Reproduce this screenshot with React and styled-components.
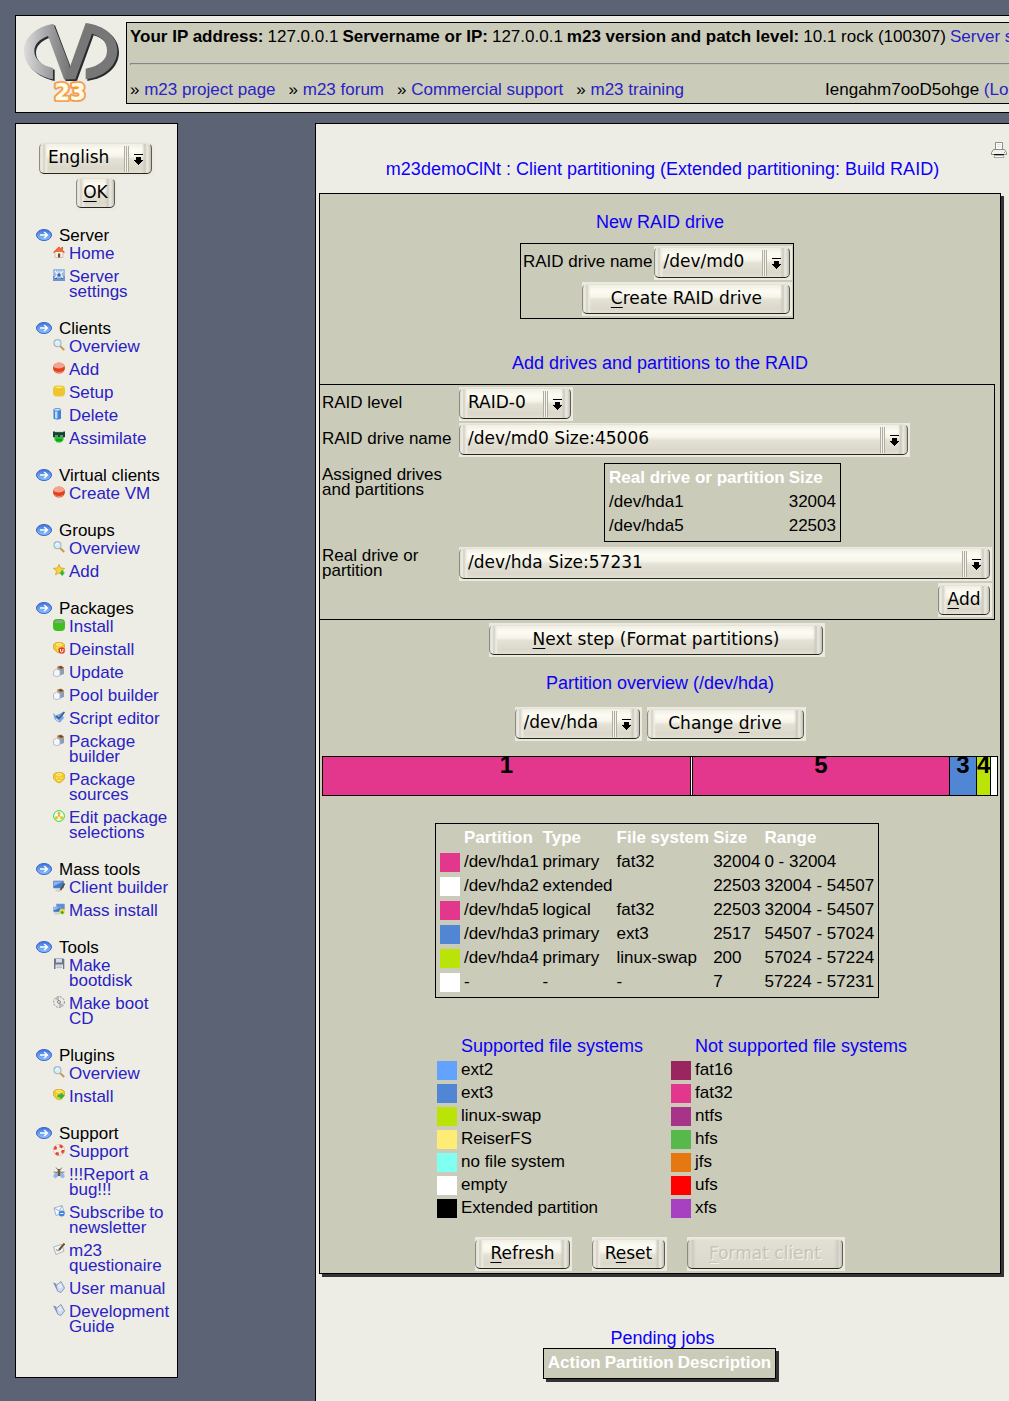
import React, { useId } from 'react';
import styled, { createGlobalStyle } from 'styled-components';

const ink = '#000';
const panel = '#eeede5';
const card = '#cbcbb9';
const link = '#2a22c4';

const GlobalStyle = createGlobalStyle`
  * { box-sizing: border-box; }
  body {
    margin: 0;
    background: #5b6374;
    color: ${ink};
    font-family: "Liberation Sans", Arial, sans-serif;
    font-size: 17px;
    line-height: 15px;
  }
  h1, h2, h3, p, ul, hr { margin: 0; padding: 0; }
  ul { list-style: none; }
`;

/* ---------- page frame ---------- */

const Page = styled.div`
  min-height: 100vh;
  padding: 15px 0 0 15px;
  display: flex;
  flex-direction: column;
  gap: 10px;
  overflow: hidden;
`;

const Header = styled.header`
  display: flex;
  align-items: flex-start;
  gap: 6px;
  padding: 6px 0 8px 7px;
  background: ${panel};
  border: 1px solid ${ink};
  border-right: 0;
`;

const LogoLink = styled.a`
  display: block;
  flex: none;
  svg { display: block; }
`;

const InfoBox = styled.div`
  flex: 1;
  min-width: 0;
  padding: 4px 0 4px 3px;
  background: ${card};
  border: 1px solid ${ink};
  border-right: 0;
  line-height: 19px;
  white-space: nowrap;
  overflow: hidden;
`;

const Facts = styled.p`
  display: flex;
  gap: 4px;
`;

const Rule = styled.hr`
  height: 2px;
  margin: 17px 0 15px;
  border: 0;
  border-top: 1px solid #85858c;
  border-left: 1px solid #85858c;
  background: #c2c2b8;
`;

const TopRow = styled.div`
  display: flex;
  gap: 141px;
`;

const TopNav = styled.nav`
  display: flex;
  gap: 13px;
`;

const A = styled.a`
  color: ${link};
  text-decoration: none;
`;

const Columns = styled.div`
  flex: 1;
  display: grid;
  grid-template-columns: 163px minmax(0, 1fr);
  gap: 137px;
`;

/* ---------- sidebar ---------- */

const Sidebar = styled.aside`
  align-self: start;
  padding: 18px 7px 43px 20px;
  background: ${panel};
  border: 1px solid ${ink};
`;

const LanguageForm = styled.form`
  display: flex;
  flex-direction: column;
  align-items: center;
  margin: 0 13px 18px 0;
`;

const Menu = styled.nav`
  display: flex;
  flex-direction: column;
  gap: 22px;
`;

const MenuTitle = styled.h3`
  display: flex;
  gap: 7px;
  margin-bottom: 3px;
  font-size: 17px;
  font-weight: normal;
  svg { flex: none; margin-top: 1px; }
`;

const MenuList = styled.ul`
  display: flex;
  flex-direction: column;
  gap: 8px;
  padding-left: 17px;
`;

const MenuItem = styled.li`
  display: flex;
  gap: 4px;
  svg { flex: none; }
`;

/* ---------- controls ---------- */

const Shell = styled.span`
  position: relative;
  display: block;
  flex: none;
  width: ${(p) => p.$width}px;
  height: 34px;
  padding: ${(p) => (p.$select ? '1px 2px 2px 0' : '2px 2px 2px 0')};
  background: #ece9de;
`;

const face = `
  display: block;
  width: 100%;
  height: 100%;
  margin: 0;
  border: 1px solid #8d8a82;
  border-top-color: #e4e1d6;
  border-bottom-color: #26251f;
  border-right-color: #5e5c56;
  border-radius: 5px;
  background:
    linear-gradient(90deg, #dedbd1 0, #efede4 2px, #d2cfc5 4px, #efede3 6px, transparent 8px),
    linear-gradient(270deg, #bfbcb2 0, #dcd9cf 2px, #eceae0 4px, #cbc8be 6px, transparent 9px),
    linear-gradient(180deg, #f1efe4 0, #fdfcf3 22%, #f6f4ea 42%, #e4e1d5 52%, #dbd8cb 85%, #e2dfd3 100%);
  color: ${ink};
  font: 17px "DejaVu Sans", sans-serif;
  line-height: 20px;
`;

const Face = styled.button`
  ${face}
  padding: 0 0 3px;
  text-align: center;
  white-space: nowrap;
  u { text-underline-offset: 3px; text-decoration-thickness: 1px; }
  &:disabled {
    color: #c6c3b8;
    text-shadow: 1px 1px 0 #f6f4ec;
    background:
      linear-gradient(90deg, #c9c6bc 0, #e0ddd3 3px, #cbc8be 4px, transparent 8px),
      linear-gradient(270deg, #c5c2b8 0, #e0ddd3 3px, #cbc8be 4px, transparent 8px),
      linear-gradient(180deg, #e2dfd4, #dad7cb);
  }
`;

const NativeSelect = styled.select`
  ${face}
  appearance: none;
  padding: 0 32px 3px 8px;
`;

const Ridge = styled.svg`
  position: absolute;
  top: 4px;
  right: 9px;
  pointer-events: none;
`;

function Button({ width, hot, children, ...rest }) {
  const at = children.indexOf(hot);
  return (
    <Shell $width={width}>
      <Face type="button" {...rest}>
        {children.slice(0, at)}<u>{hot}</u>{children.slice(at + 1)}
      </Face>
    </Shell>
  );
}

function Select({ width, id, value, label }) {
  return (
    <Shell $width={width} $select>
      <NativeSelect id={id} aria-label={label} defaultValue={value}>
        <option>{value}</option>
      </NativeSelect>
      <Ridge width="21" height="26" viewBox="0 0 21 26" shapeRendering="crispEdges">
        <path d="M0.500 0v26M2.500 0v26M4.500 0v26" stroke="#b0ada2" />
        <path d="M1.500 0v26M3.500 0v26" stroke="#f6f4ea" />
        <path d="M10 8h9v1h-9zM12 11h5v3h2v1h-1v1h-1v1h-1v1h-1v1h-1v-1h-1v-1h-1v-1h-1v-1h-1v-1h2z" fill="#000" />
      </Ridge>
    </Shell>
  );
}

/* ---------- main column ---------- */

const Main = styled.main`
  background: ${panel};
  border: 1px solid ${ink};
  border-right: 0;
  border-bottom: 0;
  padding: 18px 0 20px;
`;

const PrintRow = styled.div`
  display: flex;
  justify-content: flex-end;
  padding: 0 2px 1px;
  a, svg { display: block; }
`;

const Title = styled.h2`
  color: #0d00f8;
  font-size: 18px;
  font-weight: normal;
  line-height: 20px;
  text-align: ${(p) => (p.$left ? 'left' : 'center')};
  white-space: nowrap;
`;

const Card = styled.section`
  margin: 14px 8px 54px 3px;
  padding: 18px 0 2px;
  background: ${card};
  border: 1px solid ${ink};
  box-shadow: 3px 3px 0 #333;
`;

const Centered = styled.div`
  display: flex;
  justify-content: center;
  align-items: center;
  gap: ${(p) => p.$gap || 0}px;
  margin-top: ${(p) => p.$top || 0}px;
  margin-right: ${(p) => (p.$inner ? 6 : 0)}px;
`;

const NewRaid = styled.form`
  display: grid;
  justify-items: end;
  gap: 2px;
  width: 274px;
  margin: 11px 0 34px;
  padding: 2px;
  border: 1px solid ${ink};
`;

const FieldRow = styled.div`
  display: flex;
  align-items: flex-start;
  gap: 2px;
  white-space: nowrap;
`;

const RaidForm = styled.form`
  display: grid;
  grid-template-columns: 135px minmax(0, 1fr);
  gap: 2px;
  margin: 11px 5px 3px 0;
  padding: 2px;
  border: 1px solid ${ink};
  border-left: 0;
`;

const FieldName = styled.label`
  padding-top: ${(p) => (p.$tall ? 1 : 8)}px;
`;

const FieldTitle = styled.span`
  padding-top: 8px;
`;

const TableCell = styled.div`
  display: flex;
  justify-content: center;
  padding: 4px 8px 3px 2px;
`;

const ButtonCell = styled.div`
  grid-column: 2;
  justify-self: end;
`;

const DataTable = styled.table`
  border: 1px solid ${ink};
  border-spacing: 4px 5px;
  border-collapse: separate;
  background: ${card};
  box-shadow: ${(p) => (p.$shadow ? '3px 3px 0 #333' : 'none')};
  th, td {
    height: 19px;
    padding: 0;
    line-height: 18px;
    text-align: left;
    vertical-align: top;
    white-space: nowrap;
  }
  th { color: #fff; }
`;

const Swatch = styled.span`
  display: block;
  flex: none;
  width: 20px;
  height: 19px;
  background: ${(p) => p.$color};
`;

const DiskBar = styled.div`
  display: flex;
  height: 40px;
  margin: 15px 2px 27px;
  border: 1px solid ${ink};
`;

const Slice = styled.div`
  flex: ${(p) => p.$size} 1 0;
  min-width: 0;
  background: ${(p) => p.$color};
  font-size: 24px;
  font-weight: bold;
  line-height: 16px;
  text-align: center;
  & + & { border-left: 1px solid ${ink}; box-sizing: content-box; }
`;

const Legend = styled.div`
  display: grid;
  grid-template-columns: 234px minmax(0, 1fr);
  width: 440px;
  margin: 38px 0 19px;
`;

const LegendTitle = styled.div`
  padding-left: 24px;
  margin-bottom: 5px;
`;

const LegendList = styled.ul`
  display: flex;
  flex-direction: column;
  gap: 4px;
  line-height: 18px;
  white-space: nowrap;
  li { display: flex; gap: 4px; }
`;

/* ---------- drawings ---------- */

function Logo() {
  return (
    <svg width="97" height="80" viewBox="69 66 291 240" role="img" aria-label="m23">
      <defs>
        <linearGradient id="lg" x1="0" y1="0" x2="1" y2="0">
          <stop offset="0" stopColor="#dcdcdc" />
          <stop offset="0.450" stopColor="#a9aaac" />
          <stop offset="1" stopColor="#747474" />
        </linearGradient>
      </defs>
      <g fill="#2a2b2c" transform="translate(5 5)">
        <path d="M160 71C108 80 72 112 72 152c0 44 38 76 87 86v-34c-34-8-56-26-56-51 0-20 16-36 41-45l48 130h34l50-137c32 10 45 27 45 51 0 28-24 46-64 54v32c56-7 95-42 95-86 0-46-40-76-97-83l-48 126z" />
      </g>
      <path d="M160 71C108 80 72 112 72 152c0 44 38 76 87 86v-34c-34-8-56-26-56-51 0-20 16-36 41-45l48 130h17V197z" fill="url(#lg)" />
      <path d="M192 238h34l50-137c32 10 45 27 45 51 0 28-24 46-64 54v32c56-7 95-42 95-86 0-46-40-76-95-83l-47 131z" fill="#777" />
      <g fontFamily="DejaVu Sans, sans-serif" fontWeight="bold" fontSize="68" textAnchor="middle" strokeLinejoin="round">
        <text x="210" y="301" fill="#f6a08c" stroke="#f5a58f" strokeWidth="13">23</text>
        <text x="210" y="301" fill="#f39a21" stroke="#f39a21" strokeWidth="8">23</text>
        <text x="210" y="301" fill="#fffbe8" stroke="#fffbe8" strokeWidth="1">23</text>
      </g>
    </svg>
  );
}

function Arrow() {
  const id = useId();
  return (
    <svg width="16" height="12" viewBox="0 0 16 12">
      <defs>
        <linearGradient id={id} x1="0" y1="0" x2="0" y2="1">
          <stop offset="0" stopColor="#3f74dc" />
          <stop offset="1" stopColor="#8fc4ff" />
        </linearGradient>
      </defs>
      <ellipse cx="8" cy="6" rx="7.500" ry="5.500" fill={`url(#${id})`} stroke="#3a62c8" />
      <path d="M4 6h7M8.200 3l3.200 3-3.200 3" fill="none" stroke="#fff" strokeWidth="1.500" />
    </svg>
  );
}

const person = (
  <>
    <path d="M4 1.500 8 .5l3 2v4L8 9 4.500 7z" fill="#b9996b" />
    <path d="M5 2l3-1 2.500 1.500L8 4z" fill="#6b4a22" />
    <path d="M7 4.500v6l4-1.500V4z" fill="#8b9cc0" />
    <path d="M.5 6l3-2 3.500 1.500V10.500L4 11.700.500 10.500z" fill="#f4f6fa" stroke="#a9b1c2" strokeWidth=".8" />
  </>
);

const book = (
  <>
    <path d="M0 1.500 3 2.500l3 8L3 7.500z" fill="#8492b0" />
    <path d="M3 4.500 5 3l3-2.500L11.500 7 8 11.500 4.500 10z" fill="#cfdcf2" stroke="#7d90b8" strokeWidth=".9" />
    <path d="M5 5l3-2M6 7l3-2" stroke="#fff" />
  </>
);

const lens = (
  <>
    <path d="M7 7l4.200 4" stroke="#c79a55" strokeWidth="2" />
    <circle cx="4.500" cy="4.200" r="3.500" fill="#d6f0fb" stroke="#a9b9c4" strokeWidth="1.200" />
    <path d="M2.800 4a2 2 0 0 1 2-1.600" stroke="#fff" fill="none" />
  </>
);

const redBall = (
  <>
    <ellipse cx="6" cy="6" rx="6" ry="5.500" fill="#e2431f" />
    <path d="M.3 5C1 2 3 .600 6 .600S11 2 11.700 4.500C8 7 4 7 .300 5z" fill="#f2a491" />
    <path d="M2 9.500c2 1.300 6 1.300 8 0" stroke="#f29273" fill="none" />
  </>
);

const coin = (
  <>
    <path d="M3 .5h6l2.500 2v4L9 9.500 6 11 3 9.500.500 6.500v-4z" fill="#f3c928" stroke="#d29a15" strokeWidth=".6" />
    <path d="M3 2.500l3-1 3 1-3 1.500zM3 6h2M7 6h2M4.500 8.500h3" stroke="#fff0a0" fill="none" />
  </>
);

const ICONS = {
  home: (
    <>
      <path d="M2 5.500h8V11.500H2z" fill="#f4efe4" stroke="#b9aa90" strokeWidth=".6" />
      <path d="M0 6.200 6 .500l6 5.700-1.200.8L6 2.800 1.200 7z" fill="#e8532b" />
      <path d="M6 1.500l4.500 4.500h-9z" fill="#ee7040" />
      <path d="M5 7.500h2.200v4H5z" fill="#7a4a25" />
      <path d="M8.500 1h1.400v3L8.500 2.700z" fill="#b5482a" />
    </>
  ),
  settings: (
    <>
      <rect width="12" height="12" rx="1" fill="#9dbbe6" />
      <path d="M0 7h12v5H0z" fill="#6f94cf" />
      <path d="M2 2l2.500 3L2 9M10 2 7.500 5 10 9M4 3h4M3.500 8h5" stroke="#eef5ff" fill="none" strokeWidth="1.200" />
      <path d="M5 5h2v2H5zM2 9.500h2M8 9.500h2" stroke="#45659f" fill="#45659f" />
    </>
  ),
  lens,
  red: redBall,
  yellow: (
    <>
      <rect y="0.500" width="12" height="11" rx="4" fill="#ecc62c" />
      <path d="M2 2.500C4 1.200 8 1.200 10 2.500c-2 1-6 1-8 0z" fill="#f7e58a" />
    </>
  ),
  bin: (
    <>
      <path d="M.500 1.500h7.500v9c-1.500 1.300-6 1.300-7.500 0z" fill="#3f80d8" />
      <path d="M2 3h2.500v7.500H2z" fill="#b8dcff" />
      <ellipse cx="4.300" cy="1.800" rx="3.700" ry="1.300" fill="#cfe4fb" stroke="#3a6db8" strokeWidth=".7" />
    </>
  ),
  borg: (
    <>
      <path d="M0 1h12v5l-1.500 1v2L8 11.500H4L1.500 9V7L0 6z" fill="#22c322" />
      <path d="M0 .500h2l1 1.500 1-1.500 1 1.500 1-1.500 1 1.500 1-1.500 1 1.500L10.500.500H12v5.500H0z" fill="#1c3d33" />
      <path d="M2 5h3M7 5h3" stroke="#a8d8ff" />
      <path d="M3 9h6" stroke="#0c7c12" />
    </>
  ),
  star: (
    <>
      <path d="M6 .300 7.600 4l4.100.300-3.200 2.600 1 4L6 8.800l-3.500 2.100 1-4L.300 4.300 4.400 4z" fill="#fbd43c" stroke="#c98d1a" strokeWidth=".6" />
      <path d="M8 6.500h2.500v2H12L9.200 12 6.300 8.500H8z" fill="#2cba2c" />
    </>
  ),
  green: (
    <>
      <rect width="12" height="12" rx="4" fill="#3fbf22" />
      <path d="M1.500 2.500C3 .800 9 .800 10.500 2.500L10 4H2z" fill="#8ba68a" />
    </>
  ),
  remove: (
    <>
      {coin}
      <circle cx="8.700" cy="8.500" r="3.200" fill="#df3b2c" />
      <path d="M7.500 7v2c0 1.500 2.400 1.500 2.400 0V7" stroke="#fff" fill="none" />
    </>
  ),
  person,
  script: (
    <>
      <path d="M0 2l3 2.500L6 3l5-2.500L10 5l1 2-4 4.500L5 11 1.500 8z" fill="#7fa6df" />
      <path d="M3 5l3 2.500L11.500 1" stroke="#33578f" strokeWidth="1.500" fill="none" />
      <path d="M3 8l3 2" stroke="#dce9fb" />
    </>
  ),
  coin,
  group: (
    <>
      <circle cx="6" cy="6" r="5.400" fill="#f4fbe9" stroke="#27df3a" />
      <circle cx="6" cy="3.200" r="1.500" fill="#eebb22" />
      <circle cx="3.500" cy="7.700" r="1.700" fill="#f2c42d" />
      <circle cx="8.500" cy="7.700" r="1.700" fill="#f2c42d" />
      <path d="M6 4.700v2" stroke="#d2442c" />
    </>
  ),
  client: (
    <>
      <path d="M.5 1h10v7H.500z" fill="#3b7cd6" stroke="#7d8ba0" strokeWidth=".7" />
      <path d="M1 1.500h9L1 6z" fill="#86b5f2" />
      <path d="M3.500 9.500h4.500v2H2z" fill="#c7ccd4" />
      <path d="M11.500 3.500 7.500 10" stroke="#5b4a30" strokeWidth="1.700" />
    </>
  ),
  mass: (
    <>
      <path d="M3.500 1h8v5.500h-8z" fill="#5590e0" stroke="#8d9db4" strokeWidth=".6" />
      <path d="M.500 4h7v5h-7z" fill="#3f7bd2" stroke="#9fb1cb" strokeWidth=".6" />
      <path d="M1 4.500h6L1 7z" fill="#a7cbf6" />
      <path d="M1.500 10h5v1.500h-5z" fill="#c9ced6" />
      <circle cx="9" cy="8.500" r="2.700" fill="#f0cf2e" />
      <path d="M8.500 8h1.500v1h1.300L9.300 11.500 7.300 9h1.200z" fill="#2cb52c" />
    </>
  ),
  floppy: (
    <>
      <path d="M1 .500h9.500l.8 1V11H1z" fill="#6e7686" />
      <path d="M3 1h6v3.500H3z" fill="#d7dde8" />
      <path d="M2.500 6.500h7.500V11H2.500z" fill="#e4e6eb" />
      <path d="M3.500 8h5.500M3.500 9.500h5.500" stroke="#a7adb8" strokeWidth=".7" />
    </>
  ),
  disc: (
    <>
      <circle cx="6" cy="6" r="5.400" fill="#e9e9e7" stroke="#777" strokeWidth=".8" strokeDasharray="2 1.200" />
      <path d="M6 6 2 2.500A5 5 0 0 1 6 .800zM6 6l4.500 3A5 5 0 0 1 6 11z" fill="#b9bab8" />
      <circle cx="6" cy="6" r="1.400" fill="#fff" stroke="#555" strokeWidth=".7" />
    </>
  ),
  plugin: (
    <>
      {coin}
      <path d="M7.500 3.500l4 3-3.500 4-1-2H4.500v-3h3z" fill="#2fb52f" />
    </>
  ),
  ring: (
    <>
      <circle cx="6" cy="6" r="4.200" fill="none" stroke="#f7ece9" strokeWidth="3" />
      <circle cx="6" cy="6" r="4.200" fill="none" stroke="#e0492f" strokeWidth="3" strokeDasharray="3.300 3.300" />
      <circle cx="6" cy="6" r="5.600" fill="none" stroke="#d9a59b" strokeWidth=".5" />
    </>
  ),
  bug: (
    <>
      <path d="M0 9.500C1 6 3.500 4 6 4s5 2 6 5.500L9.500 11.500 6 8.500 2.500 11.500z" fill="#94b6ee" />
      <path d="M6 2v7" stroke="#6e5f42" strokeWidth="2.400" />
      <path d="M3 .500 5 3M9 .500 7 3M.500 5l4 .500M11.500 5l-4 .500" stroke="#8c7a55" />
    </>
  ),
  mail: (
    <>
      <path d="M1 3l8-2.500L11.500 8 3 10.500z" fill="#f4f8fe" stroke="#8fa4c6" strokeWidth=".8" />
      <path d="M1 3l5.500 3L9 .500" stroke="#9db0cf" fill="none" />
      <circle cx="8.700" cy="8.500" r="3" fill="#3f86dc" />
      <path d="M7.300 8.500h3" stroke="#fff" />
    </>
  ),
  form: (
    <>
      <path d="M.500 4l8-2.500L11 8l-8 3.500z" fill="#f5f6f8" stroke="#9fa5ae" strokeWidth=".8" />
      <path d="M11.500.500 6 7" stroke="#6d5334" strokeWidth="2" />
      <path d="M3 6l1.500 2L6 7" stroke="#7d8590" fill="none" />
    </>
  ),
  book,
};

function Icon({ name }) {
  return (
    <svg width="12" height="12" viewBox="0 0 12 12" aria-hidden="true">{ICONS[name]}</svg>
  );
}

function Printer() {
  return (
    <svg width="16" height="16" viewBox="0 0 16 16" role="img" aria-label="Print">
      <path d="M4.500.500h7v7h-7z" fill="#fbfbfa" stroke="#8e8e8b" />
      <path d="M6 2.500h4M6 4.500h4" stroke="#e2e2df" />
      <path d="M2.500 7.500h11l2 3v2H.500v-2z" fill="#f0f0ec" stroke="#8a8a86" />
      <path d="M3 12h10v1H3z" fill="#111" />
      <path d="M3.500 13.500h9l.5 2H3z" fill="#fff" stroke="#a5a5a1" />
      <path d="M13 10h1v1h-1z" fill="#4eb84e" />
    </svg>
  );
}

/* ---------- data ---------- */

const TOP_LINKS = ['m23 project page', 'm23 forum', 'Commercial support', 'm23 training'];

const MENU = [
  ['Server', [['home', 'Home'], ['settings', 'Server settings']]],
  ['Clients', [['lens', 'Overview'], ['red', 'Add'], ['yellow', 'Setup'], ['bin', 'Delete'], ['borg', 'Assimilate']]],
  ['Virtual clients', [['red', 'Create VM']]],
  ['Groups', [['lens', 'Overview'], ['star', 'Add']]],
  ['Packages', [
    ['green', 'Install'], ['remove', 'Deinstall'], ['person', 'Update'], ['person', 'Pool builder'],
    ['script', 'Script editor'], ['person', 'Package builder'], ['coin', 'Package sources'],
    ['group', 'Edit package selections'],
  ]],
  ['Mass tools', [['client', 'Client builder'], ['mass', 'Mass install']]],
  ['Tools', [['floppy', 'Make bootdisk'], ['disc', 'Make boot CD']]],
  ['Plugins', [['lens', 'Overview'], ['plugin', 'Install']]],
  ['Support', [
    ['ring', 'Support'], ['bug', '!!!Report a bug!!!'], ['mail', 'Subscribe to newsletter'],
    ['form', 'm23 questionaire'], ['book', 'User manual'], ['book', 'Development Guide'],
  ]],
];

const PINK = '#e3378d';
const BLUE = '#5086d4';
const LIME = '#bae308';

const SLICES = [
  [367, PINK, '1'], [1, '#fff', ''], [256, PINK, '5'], [26, BLUE, '3'], [13, LIME, '4'], [6, '#fff', ''],
];

const PARTITIONS = [
  [PINK, '/dev/hda1', 'primary', 'fat32', '32004', '0 - 32004'],
  ['#fff', '/dev/hda2', 'extended', '', '22503', '32004 - 54507'],
  [PINK, '/dev/hda5', 'logical', 'fat32', '22503', '32004 - 54507'],
  [BLUE, '/dev/hda3', 'primary', 'ext3', '2517', '54507 - 57024'],
  [LIME, '/dev/hda4', 'primary', 'linux-swap', '200', '57024 - 57224'],
  ['#fff', '-', '-', '-', '7', '57224 - 57231'],
];

const LEGENDS = [
  ['Supported file systems', [
    ['#64a2ff', 'ext2'], [BLUE, 'ext3'], [LIME, 'linux-swap'], ['#ffec74', 'ReiserFS'],
    ['#80fff2', 'no file system'], ['#fff', 'empty'], ['#000', 'Extended partition'],
  ]],
  ['Not supported file systems', [
    ['#9a2660', 'fat16'], [PINK, 'fat32'], ['#a73489', 'ntfs'], ['#57b84c', 'hfs'],
    ['#e67812', 'jfs'], ['#f00', 'ufs'], ['#a840c2', 'xfs'],
  ]],
];

export default function App() {
  return (
    <Page>
      <GlobalStyle />
      <Header>
        <LogoLink href="#"><Logo /></LogoLink>
        <InfoBox>
          <Facts>
            <b>Your IP address:</b><span>127.0.0.1</span>
            <b>Servername or IP:</b><span>127.0.0.1</span>
            <b>m23 version and patch level:</b><span>10.1 rock (100307)</span>
            <A href="#">Server status</A>
          </Facts>
          <Rule />
          <TopRow>
            <TopNav>
              {TOP_LINKS.map((t) => <span key={t}>» <A href="#">{t}</A></span>)}
            </TopNav>
            <span>Iengahm7ooD5ohge <A href="#">(Logout)</A></span>
          </TopRow>
        </InfoBox>
      </Header>

      <Columns>
        <Sidebar>
          <LanguageForm>
            <Select width={115} id="lang" label="Language" value="English" />
            <Button width={41} hot="O">OK</Button>
          </LanguageForm>
          <Menu>
            {MENU.map(([title, items]) => (
              <section key={title}>
                <MenuTitle><Arrow />{title}</MenuTitle>
                <MenuList>
                  {items.map(([icon, text]) => (
                    <MenuItem key={text}><Icon name={icon} /><A href="#">{text}</A></MenuItem>
                  ))}
                </MenuList>
              </section>
            ))}
          </Menu>
        </Sidebar>

        <Main>
          <PrintRow><a href="#"><Printer /></a></PrintRow>
          <Title>m23demoClNt : Client partitioning (Extended partitioning: Build RAID)</Title>

          <Card>
            <Title>New RAID drive</Title>
            <Centered $inner>
              <NewRaid>
                <FieldRow>
                  <FieldName htmlFor="new-raid">RAID drive name</FieldName>
                  <Select width={138} id="new-raid" value="/dev/md0" />
                </FieldRow>
                <Button width={210} hot="C">Create RAID drive</Button>
              </NewRaid>
            </Centered>

            <Title>Add drives and partitions to the RAID</Title>
            <RaidForm>
              <FieldName htmlFor="level">RAID level</FieldName>
              <Select width={114} id="level" value="RAID-0" />
              <FieldName htmlFor="raid">RAID drive name</FieldName>
              <Select width={451} id="raid" value="/dev/md0 Size:45006" />
              <FieldTitle>Assigned drives and partitions</FieldTitle>
              <TableCell>
                <DataTable>
                  <thead><tr><th>Real drive or partition</th><th>Size</th></tr></thead>
                  <tbody>
                    <tr><td>/dev/hda1</td><td>32004</td></tr>
                    <tr><td>/dev/hda5</td><td>22503</td></tr>
                  </tbody>
                </DataTable>
              </TableCell>
              <FieldName htmlFor="real" $tall>Real drive or partition</FieldName>
              <Select width={533} id="real" value="/dev/hda Size:57231" />
              <ButtonCell><Button width={54} hot="A">Add</Button></ButtonCell>
            </RaidForm>
            <Centered $inner>
              <Button width={336} hot="N">Next step (Format partitions)</Button>
            </Centered>

            <Centered $top={16}><Title>Partition overview (/dev/hda)</Title></Centered>
            <Centered $top={14} $gap={5}>
              <Select width={127} id="drive" label="Drive" value="/dev/hda" />
              <Button width={159} hot="d">Change drive</Button>
            </Centered>

            <DiskBar>
              {SLICES.map(([size, color, text], i) => (
                <Slice key={i} $size={size} $color={color}>{text}</Slice>
              ))}
            </DiskBar>

            <Centered $inner>
              <DataTable>
                <thead>
                  <tr><th /><th>Partition</th><th>Type</th><th>File system</th><th>Size</th><th>Range</th></tr>
                </thead>
                <tbody>
                  {PARTITIONS.map(([color, ...cells]) => (
                    <tr key={cells[0]}>
                      <td><Swatch $color={color} /></td>
                      {cells.map((c, i) => <td key={i}>{c}</td>)}
                    </tr>
                  ))}
                </tbody>
              </DataTable>
            </Centered>

            <Centered $inner>
              <Legend>
                {LEGENDS.map(([title, rows]) => (
                  <section key={title}>
                    <LegendTitle><Title $left>{title}</Title></LegendTitle>
                    <LegendList>
                      {rows.map(([color, name]) => (
                        <li key={name}><Swatch $color={color} />{name}</li>
                      ))}
                    </LegendList>
                  </section>
                ))}
              </Legend>
            </Centered>

            <Centered $gap={20}>
              <Button width={97} hot="R">Refresh</Button>
              <Button width={75} hot="e">Reset</Button>
              <Button width={158} hot="F" disabled>Format client</Button>
            </Centered>
          </Card>

          <Title>Pending jobs</Title>
          <Centered $inner>
            <DataTable $shadow>
              <thead><tr><th>Action</th><th>Partition</th><th>Description</th></tr></thead>
            </DataTable>
          </Centered>
        </Main>
      </Columns>
    </Page>
  );
}
